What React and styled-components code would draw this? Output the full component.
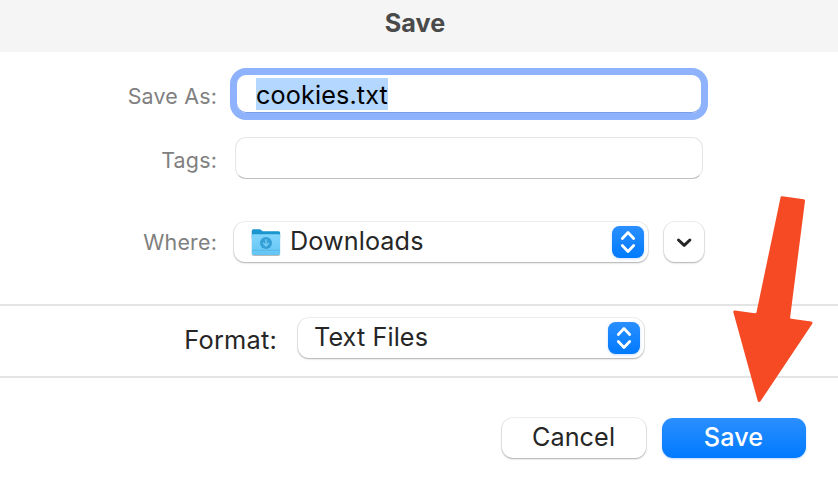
import React from "react";
import styled, { createGlobalStyle } from "styled-components";

const Global = createGlobalStyle`
  * { box-sizing: border-box; }
  body { margin: 0; background: #fff; overflow: hidden; font-family: Inter, "Liberation Sans", sans-serif; }
  button { font-family: inherit; border: 0; margin: 0; }
`;

const Dialog = styled.main`
  position: relative;
  width: 838px;
  height: 482px;
  display: flex;
  flex-direction: column;
  background: #fff;
  color: #262626;
`;

const TitleBar = styled.header`
  height: 52px;
  flex: none;
  display: flex;
  justify-content: center;
  padding-right: 8px;
  background: #f5f5f5;
`;

const Title = styled.h1`
  margin: 0;
  font-size: 25.2px;
  font-weight: 700;
  line-height: 46px;
  letter-spacing: 0;
  color: #4a4a4a;
`;

const Fields = styled.section`
  height: 252px;
  flex: none;
  display: flex;
  flex-direction: column;
  padding-top: 16px;
`;

const Row = styled.div`
  display: grid;
  grid-template-columns: ${(p) => p.$label}px auto auto 1fr;
  align-items: start;
  height: ${(p) => p.$height}px;
`;

const Label = styled.label`
  justify-self: end;
  white-space: nowrap;
  font-size: ${(p) => (p.$strong ? 25.4 : 21.4)}px;
  line-height: 40px;
  letter-spacing: 0.2px;
  margin-top: ${(p) => p.$top}px;
  color: ${(p) => (p.$strong ? "#262626" : "#808080")};
`;

const NameField = styled.div`
  width: 478px;
  height: 52px;
  margin-left: 13px;
  padding: 3px 0 0 19px;
  border: 7px solid #8eb2fc;
  border-radius: 16px;
  background: #fff;
  box-shadow: inset 0 -1px 0 #7b9fe4;
`;

const Selection = styled.span`
  display: block;
  width: 132px;
  height: 32px;
  background: #b3d7ff;
  color: #000;
  font-size: 25.2px;
  line-height: 34px;
  letter-spacing: 0.13px;
  white-space: nowrap;
`;

const TagsField = styled.div`
  width: 468px;
  height: 42px;
  margin: 0 0 0 18px;
  border: 1px solid #e6e6e6;
  border-bottom-color: #c0c0c0;
  border-radius: 11px;
`;

const Raised = styled.button`
  height: 40px;
  border-radius: 11px;
  background: #fff;
  color: #262626;
  box-shadow: 0 0 0 1px rgba(0, 0, 0, 0.06), 0 1px 2px rgba(0, 0, 0, 0.28);
`;

const Popup = styled(Raised)`
  width: ${(p) => p.$width}px;
  margin-left: ${(p) => p.$left}px;
  padding: 0 4px 0 16px;
  display: flex;
  align-items: center;
`;

const Value = styled.span`
  font-size: 25.2px;
  line-height: 38px;
  height: 40px;
  letter-spacing: 0.1px;
  flex: 1;
  text-align: left;
`;

const Stepper = styled.span`
  width: 32px;
  height: 32px;
  flex: none;
  border-radius: 7.5px;
  background: linear-gradient(#2b8fff, #007aff);
  box-shadow: 0 1px 3px rgba(0, 100, 255, 0.2);
  svg { display: block; }
`;

const Disclosure = styled(Raised)`
  width: 40px;
  margin-left: 16px;
  padding: 0;
  svg { display: block; }
`;

const Folder = styled.svg`
  width: 32px;
  height: 32px;
  margin-right: 8px;
  flex: none;
`;

const FormatSection = styled.section`
  height: 74px;
  flex: none;
  border-top: 2px solid #e4e4e4;
  border-bottom: 2px solid #e4e4e4;
  padding-top: 12px;
`;

const Actions = styled.footer`
  display: flex;
  justify-content: flex-end;
  gap: 16px;
  padding: 40px 32px 0 0;
`;

const Action = styled(Raised)`
  width: 144px;
  padding: 0 1px 0 0;
  font-size: 25.2px;
  line-height: 38px;
  display: flex;
  justify-content: center;
  letter-spacing: 0.1px;
  ${(p) =>
    p.$primary &&
    `
    color: #fff;
    font-weight: 500;
    background: linear-gradient(#2b8fff, #007aff);
    box-shadow: 0 1px 2px rgba(0, 100, 255, 0.25);
  `}
`;

const Pointer = styled.svg`
  position: absolute;
  left: 720px;
  top: 185px;
  width: 118px;
  height: 230px;
  pointer-events: none;
`;

const UpDown = () => (
  <Stepper>
    <svg width="32" height="32" viewBox="0 0 32 32" fill="none" stroke="#fff" strokeWidth="2.8" strokeLinecap="round" strokeLinejoin="round">
      <path d="M10.3 12.4 16 6.6l5.7 5.8M10.3 19.6 16 25.4l5.7-5.8" />
    </svg>
  </Stepper>
);

const DownloadsFolder = () => (
  <Folder viewBox="0 0 32 32">
    <defs>
      <linearGradient id="front" x2="0" y2="1">
        <stop offset="0" stopColor="#81d5fb" />
        <stop offset="1" stopColor="#63c5f5" />
      </linearGradient>
      <filter id="soft" x="-20%" y="-20%" width="140%" height="150%">
        <feDropShadow dx="0" dy="0.8" stdDeviation="0.6" floodOpacity="0.35" />
      </filter>
    </defs>
    <g filter="url(#soft)">
      <path d="M1.8 4.8q0-1.6 1.6-1.6h6q1 0 1.8.8l.8.8q.6.5 1.6.5h15q1.5 0 1.5 1.5V12H1.8z" fill="#1c96cf" />
      <path d="M1.8 9.6q0-1.3 1.3-1.3h25.7q1.3 0 1.3 1.3v17.6q0 1.7-1.7 1.7H3.5q-1.7 0-1.7-1.7z" fill="url(#front)" />
    </g>
    <path d="M2 24.3h28" stroke="#52b4e4" strokeWidth=".8" />
    <circle cx="16" cy="17" r="6" fill="#349fd4" />
    <path d="M16 13.7v6M13.4 17.3 16 20l2.6-2.7" fill="none" stroke="#77cff7" strokeWidth="1.3" strokeLinecap="round" strokeLinejoin="round" />
  </Folder>
);

export default function App() {
  return (
    <>
      <Global />
      <Dialog>
        <TitleBar>
          <Title>Save</Title>
        </TitleBar>
        <Fields>
          <Row $label={217} $height={69}>
            <Label $top={8}>Save As:</Label>
            <NameField>
              <Selection>cookies.txt</Selection>
            </NameField>
          </Row>
          <Row $label={217} $height={85}>
            <Label $top={3}>Tags:</Label>
            <TagsField />
          </Row>
          <Row $label={217} $height={82}>
            <Label $top={0}>Where:</Label>
            <Popup $width={414} $left={17}>
              <DownloadsFolder />
              <Value>Downloads</Value>
              <UpDown />
            </Popup>
            <Disclosure aria-label="Expand">
              <svg width="40" height="40" viewBox="0 0 40 40" fill="none" stroke="#262626" strokeWidth="3" strokeLinecap="round" strokeLinejoin="round">
                <path d="m14.5 18 5.7 5.4 5.7-5.4" />
              </svg>
            </Disclosure>
          </Row>
        </Fields>
        <FormatSection>
          <Row $label={277} $height={58}>
            <Label $strong $top={2}>Format:</Label>
            <Popup $width={346} $left={21}>
              <Value>Text Files</Value>
              <UpDown />
            </Popup>
          </Row>
        </FormatSection>
        <Actions>
          <Action>Cancel</Action>
          <Action $primary>Save</Action>
        </Actions>
        <Pointer viewBox="0 0 118 230">
          <path
            d="M62 12.8 83.5 15.8 68.6 132.5Q68.5 134.8 71 135.2L91 138 39.2 215.5 14.8 126.9 34.5 129.8Q37.5 130 38 127.5Z"
            fill="#f64a25"
            stroke="#f64a25"
            strokeWidth="3"
            strokeLinejoin="round"
          />
        </Pointer>
      </Dialog>
    </>
  );
}
